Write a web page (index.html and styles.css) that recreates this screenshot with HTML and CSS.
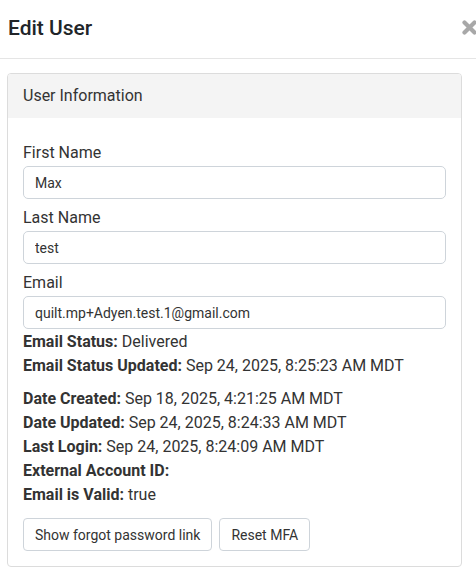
FILE: index.html
```html
<!DOCTYPE html>
<html lang="en">
<head>
<meta charset="utf-8">
<title>Edit User</title>
<link rel="stylesheet" href="styles.css">
</head>
<body>
<div class="modal">
  <div class="modal-header">
    <h4 class="modal-title">Edit User</h4>
    <button class="close" type="button" aria-label="Close">
      <svg width="15" height="15" viewBox="0 0 15 15"><path d="M2.5 2.5 L12.5 12.5 M12.5 2.5 L2.5 12.5" stroke="#a8a8a8" stroke-width="4.2" stroke-linecap="round"/></svg>
    </button>
  </div>
  <div class="modal-body">
    <div class="card">
      <div class="card-header">User Information</div>
      <div class="card-body">
        <div class="form-group">
          <label class="label">First Name</label>
          <input class="input" type="text" value="Max">
        </div>
        <div class="form-group">
          <label class="label">Last Name</label>
          <input class="input" type="text" value="test">
        </div>
        <div class="form-group last">
          <label class="label">Email</label>
          <input class="input" type="text" value="quilt.mp+Adyen.test.1@gmail.com">
        </div>
        <div class="info">
          <div class="line"><b>Email Status:</b> Delivered</div>
          <div class="line"><b>Email Status Updated:</b> Sep 24, 2025, 8:25:23 AM MDT</div>
        </div>
        <div class="info second">
          <div class="line"><b>Date Created:</b> Sep 18, 2025, 4:21:25 AM MDT</div>
          <div class="line"><b>Date Updated:</b> Sep 24, 2025, 8:24:33 AM MDT</div>
          <div class="line"><b>Last Login:</b> Sep 24, 2025, 8:24:09 AM MDT</div>
          <div class="line"><b>External Account ID:</b></div>
          <div class="line"><b>Email is Valid:</b> true</div>
        </div>
        <div class="actions">
          <button class="btn" type="button">Show forgot password link</button>
          <button class="btn" type="button">Reset MFA</button>
        </div>
      </div>
    </div>
  </div>
</div>
</body>
</html>
```
FILE: styles.css
```css
* { box-sizing: border-box; }
html, body { margin: 0; padding: 0; background: #fff; }
body {
  font-family: Roboto, "Liberation Sans", Arial, sans-serif;
  color: #333;
  width: 476px;
  overflow: hidden;
}
.modal-header {
  display: flex;
  align-items: center;
  justify-content: space-between;
  height: 59px;
  padding: 0 0 0 8px;
  border-bottom: 1px solid #e5e5e5;
}
.modal-title {
  margin: 0;
  font-size: 21px;
  font-weight: 500;
  color: #212529;
  line-height: 24px;
  padding-bottom: 2px;
}
.close {
  border: 0;
  background: none;
  padding: 0;
  margin: 0 -1px 3px 0;
  width: 15px;
  height: 15px;
  display: block;
}
.close svg { display: block; }
.modal-body {
  padding: 14px 14px 0 7px;
}
.card {
  border: 1px solid #dcdcdc;
  border-radius: 4px;
  overflow: hidden;
  width: 455px;
}
.card-header {
  background: #f4f4f4;
  height: 44px;
  padding: 10px 15px;
  font-size: 16px;
  line-height: 24px;
  color: #333;
}
.card-body {
  padding: 23px 15px 15px 15px;
}
.form-group {
  margin-bottom: 7px;
}
.form-group.last { margin-bottom: 0; }
.label {
  display: block;
  font-size: 16px;
  line-height: 24px;
  margin-bottom: 1px;
  color: #333;
}
.input {
  display: block;
  width: 100%;
  height: 33px;
  border: 1px solid #ced4da;
  border-radius: 5px;
  padding: 0 11px;
  font-family: Roboto, "Liberation Sans", Arial, sans-serif;
  font-size: 14px;
  color: #333;
  background: #fff;
  outline: none;
}
.info {
  font-size: 16px;
  line-height: 24px;
  color: #333;
  margin-top: 1px;
}
.info b { font-weight: 700; }
.info.second { margin-top: 9px; }
.actions {
  display: flex;
  gap: 7px;
  margin-top: 11px;
}
.btn {
  height: 33px;
  padding: 0 11px;
  border: 1px solid #ced4da;
  border-radius: 4px;
  background: #fff;
  font-family: Roboto, "Liberation Sans", Arial, sans-serif;
  font-size: 14px;
  color: #333;
}
```
